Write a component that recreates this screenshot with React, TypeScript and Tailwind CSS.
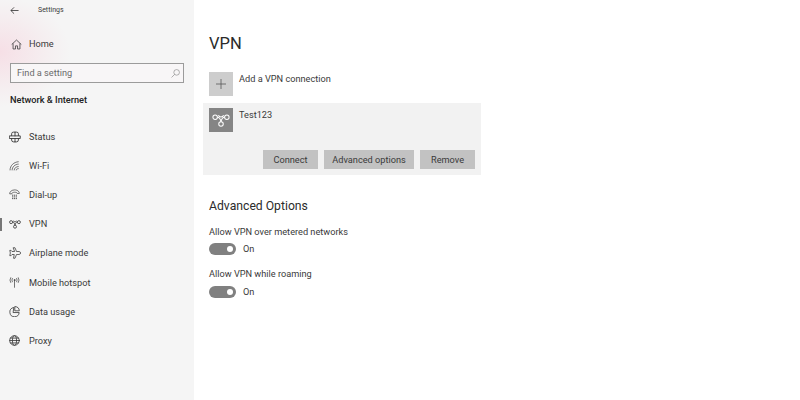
import React from "react";

const S = { fill: "none", stroke: "#3a3a3a", strokeWidth: 1, strokeLinecap: "round" as const, strokeLinejoin: "round" as const };

function VpnGlyph({ size = 12, color = "#3a3a3a", sw = 1 }: { size?: number; color?: string; sw?: number }) {
  return (
    <svg width={size} height={size} viewBox="0 0 16 16" fill="none" stroke={color} strokeWidth={sw}>
      <circle cx="2.8" cy="5.5" r="2" />
      <circle cx="13.2" cy="5.5" r="2" />
      <circle cx="8" cy="11.6" r="2" />
      <path d="M4.8 5.5C6.5 5.5 7.6 7.6 8 9.6C8.4 7.6 9.5 5.5 11.2 5.5" />
      <path d="M5.6 3.9Q8 6.9 10.4 3.9" />
    </svg>
  );
}

const icons: Record<string, React.ReactNode> = {
  Status: (
    <svg width="12" height="12" viewBox="0 0 16 16" {...S} strokeWidth={1.2}>
      <path d="M3.5 6V3.5Q3.5 1.5 6 1.5H10Q12.5 1.5 12.5 3.5V6" />
      <path d="M1 6.5H15V10H1Z" />
      <path d="M3.5 10V12Q3.5 14.5 6 14.5H10Q12.5 14.5 12.5 12V10M8 1.5V6.5M8 10V14.5" />
    </svg>
  ),
  "Wi-Fi": (
    <svg width="11" height="11" viewBox="0 0 16 16" {...S}>
      <path d="M1.5 14.5C1.5 8 7 3 13.5 2.5" />
      <path d="M4.5 14.5C4.5 10 9 6 13.5 6" />
      <path d="M7.5 14.5C7.5 12 10.5 9.5 13.5 9.5" />
      <path d="M10.5 14.5C10.5 13.5 12 12.5 13.5 12.5" />
    </svg>
  ),
  "Dial-up": (
    <svg width="11" height="11" viewBox="0 0 16 16" {...S}>
      <path d="M1 6.5C1 -0.5 15 -0.5 15 6.5H12C12 4 4 4 4 6.5Z" />
      <path d="M5 9h.6M7.7 9h.6M10.4 9h.6M5 11.5h.6M7.7 11.5h.6M10.4 11.5h.6M5 14h.6M7.7 14h.6M10.4 14h.6" strokeWidth={1.3} />
    </svg>
  ),
  VPN: <VpnGlyph size={12} sw={1.1} />,
  "Airplane mode": (
    <svg width="12" height="12" viewBox="0 0 16 16" {...S}>
      <path d="M6 1H8L10 6H13.5Q15.5 6.5 15.5 8T13.5 10H10L8 15H6L7 10H4L2.8 11.5H1L1.8 8L1 4.5H2.8L4 6H7Z" />
    </svg>
  ),
  "Mobile hotspot": (
    <svg width="11" height="11" viewBox="0 0 16 16" {...S}>
      <path d="M8 6.5V15" />
      <circle cx="8" cy="4.5" r="0.8" fill="#3a3a3a" />
      <path d="M4.8 2Q3.4 4.5 4.8 7M11.2 2Q12.6 4.5 11.2 7M2.4 1Q0.2 4.5 2.4 8M13.6 1Q15.8 4.5 13.6 8" />
    </svg>
  ),
  "Data usage": (
    <svg width="11" height="11" viewBox="0 0 16 16" {...S} strokeWidth={1.2}>
      <path d="M6.5 2.2A6.8 6.8 0 1 0 14.8 9.5H6.5Z" />
      <path d="M9 0.8A6.5 6.5 0 0 1 15 7H9Z" />
    </svg>
  ),
  Proxy: (
    <svg width="11" height="11" viewBox="0 0 16 16" {...S} strokeWidth={1.2}>
      <circle cx="8" cy="8" r="7" />
      <ellipse cx="8" cy="8" rx="3" ry="7" />
      <path d="M1 8H15M2 4.5H14M2 11.5H14" />
    </svg>
  ),
};

const items = ["Status", "Wi-Fi", "Dial-up", "VPN", "Airplane mode", "Mobile hotspot", "Data usage", "Proxy"];

function Toggle() {
  return (
    <div className="flex items-center gap-[7px] h-3">
      <div className="w-[27px] h-3 rounded-full bg-[#808080] flex items-center justify-end pr-[3px]">
        <div className="w-[6px] h-[6px] rounded-full bg-white" />
      </div>
      <span className="text-[9.2px] leading-3 text-[#3a3a3a]">On</span>
    </div>
  );
}

export default function App() {
  return (
    <div className="w-[800px] h-[400px] overflow-hidden flex bg-white text-[#2b2b2b] font-['Roboto','Noto_Sans',sans-serif]">
      <aside className="w-[194px] h-full shrink-0 bg-[#f5f5f5] bg-[radial-gradient(ellipse_70px_55px_at_0px_52px,#f6dfe6,#f5eef0_65%,#f5f5f5_100%)]">
        <div className="h-5 pl-[10px] flex items-center">
          <svg width="9" height="9" viewBox="0 0 10 10" fill="none" stroke="#333" strokeWidth="0.9">
            <path d="M9.5 5H1M4.5 1.5L1 5L4.5 8.5" />
          </svg>
          <span className="ml-[19px] text-[7px] text-[#3a3a3a]">Settings</span>
        </div>
        <div className="mt-[16px] h-4 pl-[11px] flex items-center gap-[7px]">
          <svg width="11" height="11" viewBox="0 0 16 16" fill="none" stroke="#444" strokeWidth="1.2">
            <path d="M1 8L8 1.5L15 8M3 6.5V14.5H6.5V10H9.5V14.5H13V6.5" />
          </svg>
          <span className="text-[9.2px] leading-4 text-[#3a3a3a]">Home</span>
        </div>
        <div className="mt-[11px] mx-[10px] h-[20px] border border-[#9b9b9b] bg-[#f8f6f7] flex items-center justify-between pl-[6px] pr-[3px]">
          <span className="text-[9.2px] text-[#6b6b6b]">Find a setting</span>
          <svg width="9" height="9" viewBox="0 0 16 16" fill="none" stroke="#8a8a8a" strokeWidth="1.2">
            <circle cx="10" cy="6" r="5" />
            <path d="M6.5 9.5L1 15" />
          </svg>
        </div>
        <div className="mt-[9px] pl-[10px] h-4 text-[9.2px] leading-4 font-medium text-[#222]">Network &amp; Internet</div>
        <nav className="mt-[14px] flex flex-col">
          {items.map((t) => (
            <div key={t} className="relative h-[29.2px] flex items-center pl-[9px]">
              {t === "VPN" && <div className="absolute left-0 top-[8px] w-[2px] h-[13px] bg-[#777]" />}
              <span className="w-[20px] flex items-center">{icons[t]}</span>
              <span className="text-[9.2px] text-[#3a3a3a]">{t}</span>
            </div>
          ))}
        </nav>
      </aside>
      <main className="flex-1 pl-[9px] pt-[32px]">
        <h1 className="pl-[6px] h-6 text-[16.5px] leading-6 font-normal text-[#2b2b2b]">VPN</h1>
        <div className="mt-[16px] ml-[6px] flex gap-[6px]">
          <div className="w-6 h-6 bg-[#cdcdcd] flex items-center justify-center">
            <svg width="10" height="10" viewBox="0 0 10 10" stroke="#555" strokeWidth="0.8">
              <path d="M5 0V10M0 5H10" />
            </svg>
          </div>
          <span className="text-[9.2px] leading-3 text-[#3a3a3a] pt-px">Add a VPN connection</span>
        </div>
        <div className="mt-[7px] w-[278px] h-[72px] bg-[#f2f2f2] px-[6px] pt-[5px] flex flex-col">
          <div className="flex gap-[6px]">
            <div className="w-6 h-6 bg-[#858585] flex items-center justify-center">
              <VpnGlyph size={18} color="#fff" sw={0.9} />
            </div>
            <span className="text-[9.2px] leading-3 text-[#3a3a3a] pt-px">Test123</span>
          </div>
          <div className="mt-[18px] flex justify-end gap-[6px]">
            <div className="w-[55px] h-[19px] bg-[#c2c2c2] flex items-center justify-center text-[9.2px] text-[#3a3a3a]">Connect</div>
            <div className="w-[90px] h-[19px] bg-[#c2c2c2] flex items-center justify-center text-[9.2px] text-[#3a3a3a]">Advanced options</div>
            <div className="w-[55px] h-[19px] bg-[#c2c2c2] flex items-center justify-center text-[9.2px] text-[#3a3a3a]">Remove</div>
          </div>
        </div>
        <h2 className="mt-[22px] pl-[6px] h-[18px] text-[12.2px] leading-[18px] font-normal text-[#2b2b2b]">Advanced Options</h2>
        <div className="mt-[11px] pl-[6px] flex flex-col">
          <span className="h-3 text-[9.2px] leading-3 text-[#3a3a3a]">Allow VPN over metered networks</span>
          <div className="mt-[5px]"><Toggle /></div>
          <span className="mt-[13px] h-3 text-[9.2px] leading-3 text-[#3a3a3a]">Allow VPN while roaming</span>
          <div className="mt-[6px]"><Toggle /></div>
        </div>
      </main>
    </div>
  );
}
